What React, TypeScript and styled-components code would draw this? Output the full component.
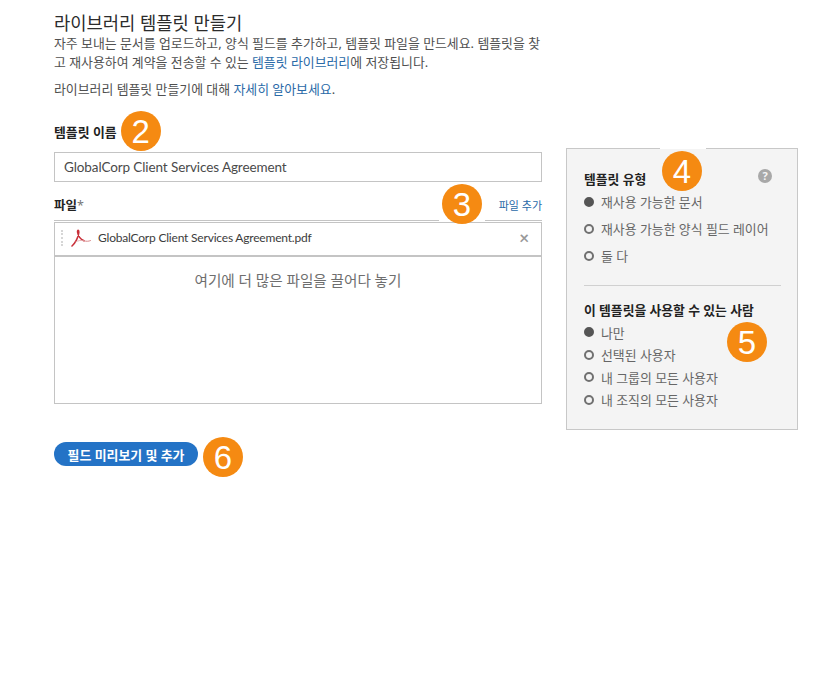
import React from 'react'
import styled, { createGlobalStyle } from 'styled-components'

const fontStack = `"Lato", "Noto Sans CJK KR", sans-serif`

const GlobalStyle = createGlobalStyle`
  html, body {
    margin: 0;
    background: #fff;
    font-family: "Noto Sans", "Noto Sans CJK KR", sans-serif;
  }
`

const Page = styled.div`
  display: flex;
  align-items: flex-start;
  width: 829px;
  height: 697px;
  box-sizing: border-box;
  padding: 13px 0 0 54px;
  font-family: "Noto Sans", "Noto Sans CJK KR", sans-serif;
`

const Main = styled.main`
  width: 488px;
  display: flex;
  flex-direction: column;
`

const Title = styled.h1`
  margin: 0;
  font-size: 17.7px;
  line-height: 21px;
  font-weight: 400;
  color: #2c2c2c;
`

const Intro = styled.p`
  margin: 0 0 8px;
  font-size: 12.9px;
  line-height: 19px;
  color: #505050;
`

const TextLink = styled.a`
  color: #2a6aa8;
  text-decoration: none;
`

const LabelRow = styled.div`
  display: flex;
  align-items: center;
  gap: 4px;
  height: 40px;
  margin-top: 4px;
`

const Label = styled.label`
  font-size: 12.9px;
  font-weight: 600;
  color: #222;
`

const Badge = styled.span`
  flex: none;
  width: 40px;
  height: 40px;
  border-radius: 50%;
  background: #f58a12;
  color: #fff;
  display: flex;
  align-items: center;
  justify-content: center;
  font-family: "Liberation Sans", sans-serif;
  font-size: 33px;
  line-height: 1;
`

const NameInput = styled.div`
  height: 30px;
  margin-top: 1px;
  box-sizing: border-box;
  border: 1px solid #c4c4c4;
  padding: 0 9px;
  display: flex;
  align-items: center;
  font-family: ${fontStack};
  font-size: 13.5px;
  letter-spacing: -0.1px;
  color: #4a4a4a;
`

const FilesHeader = styled.div`
  position: relative;
  display: flex;
  align-items: center;
  justify-content: space-between;
  height: 38px;
  border-bottom: 1px solid #c4c4c4;
`

const FilesLabel = styled(Label)`
  margin-top: 7px;
  font-size: 12.5px;
  span {
    font-weight: 400;
    color: #777;
  }
`

const AddFile = styled(TextLink)`
  font-size: 11px;
  margin-top: 8px;
`

const FloatingBadge = styled(Badge)<{ $top: number; $left: number }>`
  position: absolute;
  top: ${p => p.$top}px;
  left: ${p => p.$left}px;
`

const Notch = styled.span<{ $top: number; $left: number; $height: number }>`
  position: absolute;
  top: ${p => p.$top}px;
  left: ${p => p.$left}px;
  width: 46px;
  height: ${p => p.$height}px;
  background: #fff;
`

const FileBox = styled.div`
  border: 1px solid #c4c4c4;
  margin-top: 1px;
`

const FileRow = styled.div`
  height: 34px;
  box-sizing: border-box;
  display: flex;
  align-items: center;
  padding: 0 12px 3px 6px;
  border-bottom: 2px solid #c4c4c4;
  font-family: ${fontStack};
  font-size: 12px;
  letter-spacing: -0.2px;
  color: #3c3c3c;
`

const Grip = styled.span`
  width: 0;
  height: 16px;
  border-left: 2px dotted #d6d6d6;
  margin-right: 8px;
`

const FileName = styled.span`
  margin-left: 7px;
  flex: 1;
`

const Remove = styled.span`
  color: #999;
  font-size: 17px;
  font-weight: 700;
  line-height: 1;
`

const DropZone = styled.div`
  height: 146px;
  box-sizing: border-box;
  padding-top: 13px;
  text-align: center;
  font-size: 14.6px;
  line-height: 20px;
  color: #6e6e6e;
`

const Actions = styled.div`
  display: flex;
  align-items: center;
  gap: 5px;
  margin-top: 33px;
`

const PrimaryButton = styled.button`
  width: 144px;
  height: 24px;
  margin-bottom: 6px;
  padding: 0;
  border: 0;
  border-radius: 12px;
  background: #2473c6;
  color: #fff;
  font-family: inherit;
  font-size: 12.9px;
  font-weight: 600;
`

const Side = styled.aside`
  position: relative;
  width: 232px;
  height: 282px;
  box-sizing: border-box;
  margin: 135px 0 0 24px;
  padding: 20px 16px 0 17px;
  background: #f4f4f4;
  border: 1px solid #c8c8c8;
`

const SideHead = styled.div`
  display: flex;
  align-items: center;
  justify-content: space-between;
  height: 19px;
  padding-right: 9px;
`

const SideTitle = styled.h2`
  margin: 0;
  font-size: 12.8px;
  line-height: 22px;
  font-weight: 600;
  color: #222;
`

const Help = styled.span`
  width: 14px;
  height: 14px;
  margin-bottom: 6px;
  border-radius: 50%;
  background: #a8a8a8;
  color: #f4f4f4;
  font-size: 11px;
  font-weight: 700;
  line-height: 14px;
  text-align: center;
`

const Option = styled.div<{ $rowHeight: number }>`
  display: flex;
  align-items: center;
  gap: 7px;
  height: ${p => p.$rowHeight}px;
  font-size: 12.9px;
  color: #666;
`

const Radio = styled.span<{ $on?: boolean }>`
  flex: none;
  width: 10px;
  height: 10px;
  box-sizing: border-box;
  border-radius: 50%;
  border: 2px solid ${p => (p.$on ? '#555' : '#707070')};
  background: ${p => (p.$on ? '#555' : 'transparent')};
`

const Divider = styled.hr`
  border: 0;
  border-top: 1px solid #d0d0d0;
  margin: 16px 0 13px;
`

const PdfIcon = () => (
  <svg width="20" height="18" viewBox="0 0 20 18" fill="none">
    <path
      d="M1 17C4 14.5 7.5 8.5 7.8 3.5C8 0.5 6.4 0.5 6.6 3.2C7 7 10 10.6 13 11.8"
      stroke="#c9303a"
      strokeWidth="1.6"
      strokeLinecap="round"
    />
    <path d="M13 11.8C15 12.5 17.5 12.5 19.5 11.6" stroke="#d98a8c" strokeWidth="1" strokeLinecap="round" />
    <path d="M4.5 13C7 11.6 10 11 13 11.8" stroke="#e2a5a7" strokeWidth="0.8" />
  </svg>
)

const typeOptions = ['재사용 가능한 문서', '재사용 가능한 양식 필드 레이어', '둘 다']
const audienceOptions = ['나만', '선택된 사용자', '내 그룹의 모든 사용자', '내 조직의 모든 사용자']

export default function App() {
  return (
    <Page>
      <GlobalStyle />
      <Main>
        <Title>라이브러리 템플릿 만들기</Title>
        <Intro>
          자주 보내는 문서를 업로드하고, 양식 필드를 추가하고, 템플릿 파일을 만드세요. 템플릿을 찾
          <br />
          고 재사용하여 계약을 전송할 수 있는 <TextLink href="#">템플릿 라이브러리</TextLink>에 저장됩니다.
        </Intro>
        <Intro>
          라이브러리 템플릿 만들기에 대해 <TextLink href="#">자세히 알아보세요</TextLink>.
        </Intro>
        <LabelRow>
          <Label>템플릿 이름</Label>
          <Badge>2</Badge>
        </LabelRow>
        <NameInput>GlobalCorp Client Services Agreement</NameInput>
        <FilesHeader>
          <FilesLabel>
            파일<span>*</span>
          </FilesLabel>
          <AddFile href="#">파일 추가</AddFile>
          <Notch $top={38} $left={385} $height={1} />
          <FloatingBadge $top={2} $left={388}>
            3
          </FloatingBadge>
        </FilesHeader>
        <FileBox>
          <FileRow>
            <Grip />
            <PdfIcon />
            <FileName>GlobalCorp Client Services Agreement.pdf</FileName>
            <Remove>×</Remove>
          </FileRow>
          <DropZone>여기에 더 많은 파일을 끌어다 놓기</DropZone>
        </FileBox>
        <Actions>
          <PrimaryButton>필드 미리보기 및 추가</PrimaryButton>
          <Badge>6</Badge>
        </Actions>
      </Main>
      <Side>
        <Notch $top={-1} $left={93} $height={1} />
        <FloatingBadge $top={2} $left={95}>
          4
        </FloatingBadge>
        <SideHead>
          <SideTitle>템플릿 유형</SideTitle>
          <Help>?</Help>
        </SideHead>
        {typeOptions.map((o, i) => (
          <Option key={o} $rowHeight={27}>
            <Radio $on={i === 0} />
            {o}
          </Option>
        ))}
        <Divider />
        <SideTitle>이 템플릿을 사용할 수 있는 사람</SideTitle>
        {audienceOptions.map((o, i) => (
          <Option key={o} $rowHeight={22.5}>
            <Radio $on={i === 0} />
            {o}
          </Option>
        ))}
        <FloatingBadge $top={173} $left={160}>
          5
        </FloatingBadge>
      </Side>
    </Page>
  )
}
